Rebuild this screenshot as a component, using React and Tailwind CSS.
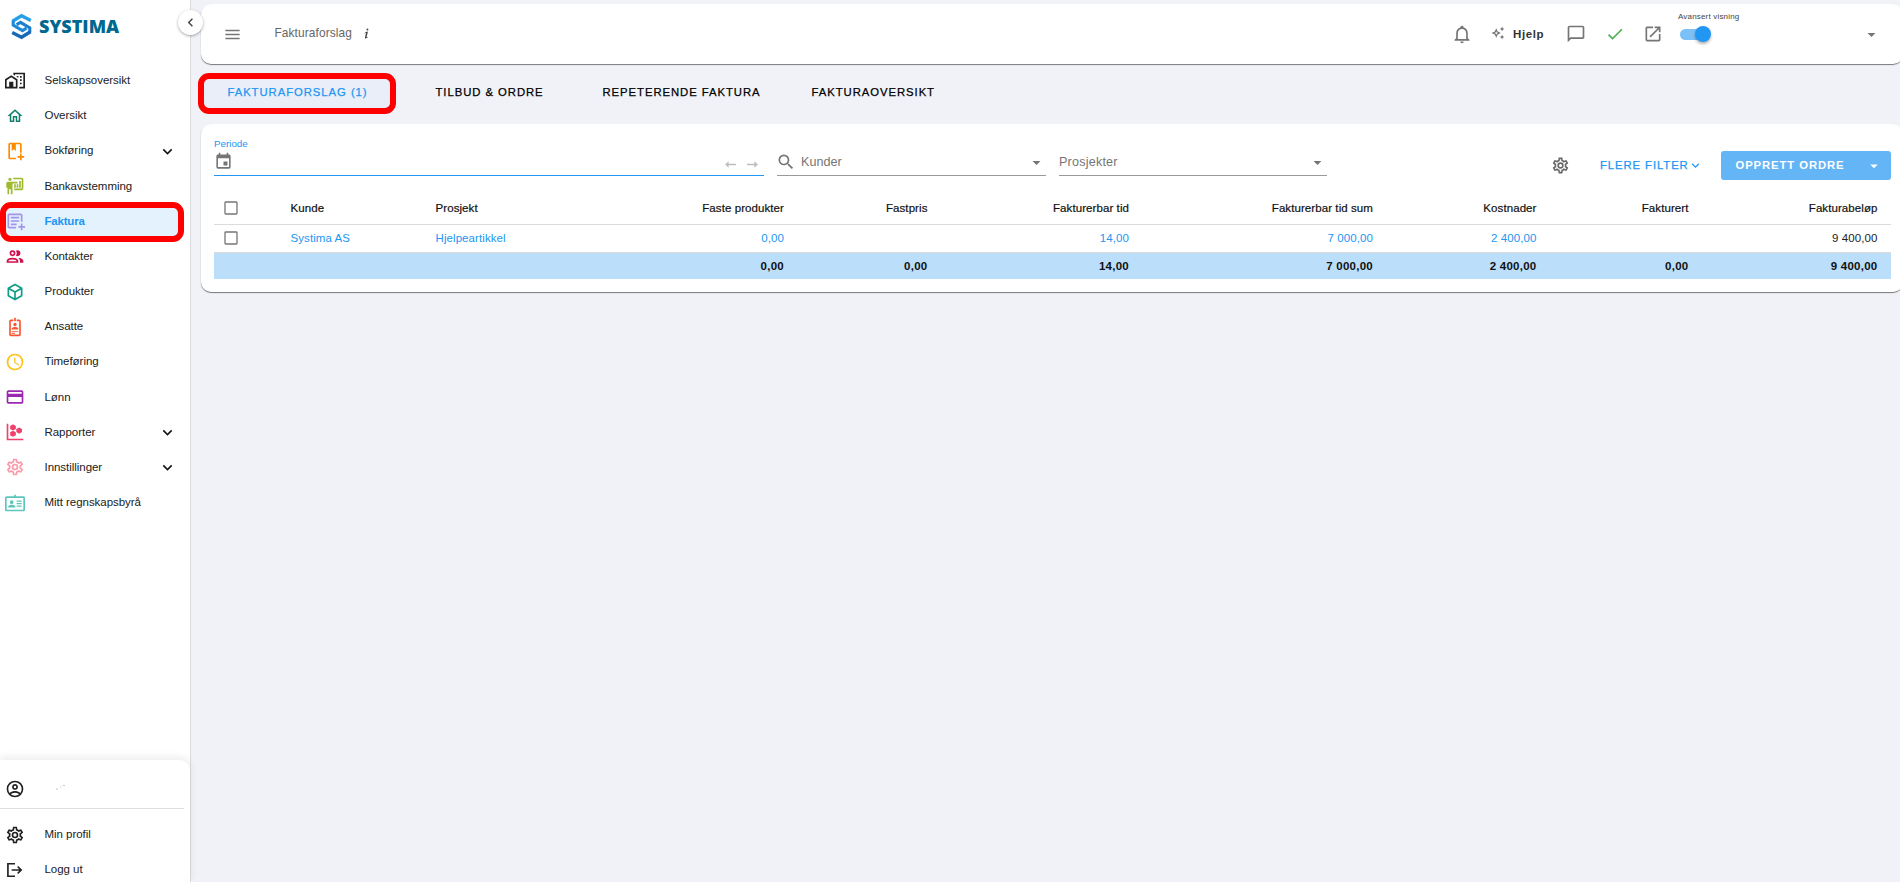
import React from 'react';
import { MdMenu, MdArrowDropDown, MdChevronLeft } from 'react-icons/md';

const paths = {
  city: 'M10 2V4.26L12 5.59V4H22V19H17V21H24V2H10M7.5 5L0 10V21H15V10L7.5 5M14 6V6.93L15.61 8H16V6H14M18 6V8H20V6H18M7.5 7.5L13 11V19H10V13H5V19H2V11L7.5 7.5M18 10V12H20V10H18M18 14V16H20V14H18Z',
  home: 'M12 5.69L17 10.19V18H15V12H9V18H7V10.19L12 5.69M12 3L2 12H5V20H11V14H13V20H19V12H22L12 3',
  book: 'M13 20c0 .7.1 1.4.35 2H6c-1.1 0-2-.9-2-2V4c0-1.1.9-2 2-2h12c1.1 0 2 .9 2 2v10.1a5.6 5.6 0 0 0-2 0V4h-5v8l-2.5-2.25L8 12V4H6v16h7M18 15v3h-3v2h3v3h2v-3h3v-2h-3v-3h-2',
  board: 'M20 17a2 2 0 0 0 2-2V4a2 2 0 0 0-2-2H9.46c.35.61.54 1.3.54 2h10v11h-9v2h9M15 7v2H9v13H7v-6H5v6H3v-8H1.5V9a2 2 0 0 1 2-2H15M8 4a2 2 0 0 1-4 0 2 2 0 0 1 4 0M17 6h2v8h-2V6M14 10h2v4h-2v-4M11 10h2v4h-2v-4',
  note: 'M13.1 19H5V5h14v8.1c.3-.1.7-.1 1-.1s.7 0 1 .1V5c0-1.1-.9-2-2-2H5c-1.1 0-2 .9-2 2v14c0 1.1.9 2 2 2h8.35a5.6 5.6 0 0 1-.25-2M7 7h10v2H7V7m0 4h10v2H7v-2m0 4h7v2H7v-2m12 0v3h-3v2h3v3h2v-3h3v-2h-3v-3h-2',
  people: 'M13.07 10.41A5 5 0 0 0 13.07 4.59A3.39 3.39 0 0 1 15 4A3.5 3.5 0 0 1 15 11A3.39 3.39 0 0 1 13.07 10.41M5.5 7.5A3.5 3.5 0 1 1 9 11A3.5 3.5 0 0 1 5.5 7.5M7.5 7.5A1.5 1.5 0 1 0 9 6A1.5 1.5 0 0 0 7.5 7.5M16 17V19H2V17S2 13 9 13 16 17 16 17M14 17C13.86 16.22 12.67 15 9 15S4.07 16.31 4 17M15.95 13A5.32 5.32 0 0 1 18 17V19H22V17S22 13.37 15.94 13Z',
  cube: 'M21,16.5C21,16.88 20.79,17.21 20.47,17.38L12.57,21.82C12.41,21.94 12.21,22 12,22C11.79,22 11.59,21.94 11.43,21.82L3.53,17.38C3.21,17.21 3,16.88 3,16.5V7.5C3,7.12 3.21,6.79 3.53,6.62L11.43,2.18C11.59,2.06 11.79,2 12,2C12.21,2 12.41,2.06 12.57,2.18L20.47,6.62C20.79,6.79 21,7.12 21,7.5V16.5M12,4.15L6.04,7.5L12,10.85L17.96,7.5L12,4.15M5,15.91L11,19.29V12.58L5,9.21V15.91M19,15.91V9.21L13,12.58V19.29L19,15.91Z',
  badge: 'M17,3H14V5H17V21H7V5H10V3H7A2,2 0 0,0 5,5V21A2,2 0 0,0 7,23H17A2,2 0 0,0 19,21V5A2,2 0 0,0 17,3M12,7A2,2 0 0,1 14,9A2,2 0 0,1 12,11A2,2 0 0,1 10,9A2,2 0 0,1 12,7M16,15H8V14C8,12.67 10.67,12 12,12C13.33,12 16,12.67 16,14V15M16,18H8V17H16V18M12,20H8V19H12V20M13,5H11V1H13V5Z',
  clock: 'M12,20A8,8 0 0,0 20,12A8,8 0 0,0 12,4A8,8 0 0,0 4,12A8,8 0 0,0 12,20M12,2A10,10 0 0,1 22,12A10,10 0 0,1 12,22C6.47,22 2,17.5 2,12A10,10 0 0,1 12,2M12.5,7V12.25L17,14.92L16.25,16.15L11,13V7H12.5Z',
  card: 'M20,8H4V6H20M20,18H4V12H20M20,4H4C2.89,4 2,4.89 2,6V18C2,19.1 2.9,20 4,20H20A2,2 0 0,0 22,18V6C22,4.89 21.1,4 20,4Z',
  chart: 'M2 2h2v18h18v2H2V2M9.6 2.8L13 4.7V8.3L9.6 10.2L6.2 8.3V4.7L9.6 2.8M9.6 10.4L13 12.3V15.9L9.6 17.8L6.2 15.9V12.3L9.6 10.4M17 6.6L20.4 8.5V12.1L17 14L13.6 12.1V8.5L17 6.6',
  cog: 'M12,8A4,4 0 0,1 16,12A4,4 0 0,1 12,16A4,4 0 0,1 8,12A4,4 0 0,1 12,8M12,10A2,2 0 0,0 10,12A2,2 0 0,0 12,14A2,2 0 0,0 14,12A2,2 0 0,0 12,10M10,22C9.75,22 9.54,21.82 9.5,21.58L9.13,18.93C8.5,18.68 7.96,18.34 7.44,17.94L4.95,18.95C4.73,19.03 4.46,18.95 4.34,18.73L2.34,15.27C2.21,15.05 2.27,14.78 2.46,14.63L4.57,12.97L4.5,12L4.57,11L2.46,9.37C2.27,9.22 2.21,8.95 2.34,8.73L4.34,5.27C4.46,5.05 4.73,4.96 4.95,5.05L7.44,6.05C7.96,5.66 8.5,5.32 9.13,5.07L9.5,2.42C9.54,2.18 9.75,2 10,2H14C14.25,2 14.46,2.18 14.5,2.42L14.87,5.07C15.5,5.32 16.04,5.66 16.56,6.05L19.05,5.05C19.27,4.96 19.54,5.05 19.66,5.27L21.66,8.73C21.79,8.95 21.73,9.22 21.54,9.37L19.43,11L19.5,12L19.43,13L21.54,14.63C21.73,14.78 21.79,15.05 21.66,15.27L19.66,18.73C19.54,18.95 19.27,19.04 19.05,18.95L16.56,17.95C16.04,18.34 15.5,18.68 14.87,18.93L14.5,21.58C14.46,21.82 14.25,22 14,22H10M11.25,4L10.88,6.61C9.68,6.86 8.62,7.5 7.85,8.39L5.44,7.35L4.69,8.65L6.8,10.2C6.4,11.37 6.4,12.64 6.8,13.8L4.68,15.36L5.43,16.66L7.86,15.62C8.63,16.5 9.68,17.14 10.87,17.38L11.24,20H12.76L13.13,17.39C14.32,17.14 15.37,16.5 16.14,15.62L18.57,16.66L19.32,15.36L17.2,13.81C17.6,12.64 17.6,11.37 17.2,10.2L19.31,8.65L18.56,7.35L16.15,8.39C15.38,7.5 14.32,6.86 13.12,6.62L12.75,4H11.25Z',
  idcard: 'M22 4h-9V2h-2v2H2C.9 4 0 4.9 0 6v14c0 1.1.9 2 2 2h20c1.1 0 2-.9 2-2V6c0-1.1-.9-2-2-2m0 16H2V6h20v14M14 9h6v1.5h-6V9m0 3h6v1.5h-6V12m0 3h6v1.5h-6V15M8 13.2A2.2 2.2 0 1 0 8 8.8a2.2 2.2 0 0 0 0 4.4M12.5 17.5H3.8v-1.1c0-1.5 2.9-2.3 4.3-2.3s4.4.8 4.4 2.3v1.1',
  account: 'M12,2A10,10 0 0,0 2,12A10,10 0 0,0 12,22A10,10 0 0,0 22,12A10,10 0 0,0 12,2M7.07,18.28C7.5,17.38 10.12,16.5 12,16.5C13.88,16.5 16.5,17.38 16.93,18.28C15.57,19.36 13.86,20 12,20C10.14,20 8.43,19.36 7.07,18.28M18.36,16.83C16.93,15.09 13.46,14.5 12,14.5C10.54,14.5 7.07,15.09 5.64,16.83C4.62,15.5 4,13.82 4,12C4,7.59 7.59,4 12,4C16.41,4 20,7.59 20,12C20,13.82 19.38,15.5 18.36,16.83M12,6C10.06,6 8.5,7.56 8.5,9.5C8.5,11.44 10.06,13 12,13C13.94,13 15.5,11.44 15.5,9.5C15.5,7.56 13.94,6 12,6M12,11A1.5,1.5 0 0,1 10.5,9.5A1.5,1.5 0 0,1 12,8A1.5,1.5 0 0,1 13.5,9.5A1.5,1.5 0 0,1 12,11Z',
  logout: 'M2.5 3.5H12v2H4.5v13H12v2H2.5v-17M15.9 7.1l4.9 4.9-4.9 4.9-1.4-1.4 2.5-2.5H8v-2h9l-2.5-2.5 1.4-1.4',
  bell: 'M10 21H14C14 22.1 13.1 23 12 23S10 22.1 10 21M21 19V20H3V19L5 17V11C5 7.9 7 5.2 10 4.3V4C10 2.9 10.9 2 12 2S14 2.9 14 4V4.3C17 5.2 19 7.9 19 11V17L21 19M17 11C17 8.2 14.8 6 12 6S7 8.2 7 11V18H17V11Z',
  sparkle: 'M9 4L11.5 9.5L17 12L11.5 14.5L9 20L6.5 14.5L1 12L6.5 9.5L9 4M9 8.83L8 11L5.83 12L8 13L9 15.17L10 13L12.17 12L10 11L9 8.83M19 9L17.74 6.26L15 5L17.74 3.75L19 1L20.25 3.75L23 5L20.25 6.26L19 9M19 23L17.74 20.26L15 19L17.74 17.75L19 15L20.25 17.75L23 19L20.25 20.26L19 23Z',
  message: 'M20 2H4C2.9 2 2 2.9 2 4V22L6 18H20C21.1 18 22 17.1 22 16V4C22 2.9 21.1 2 20 2M20 16H5.17L4 17.17V4H20V16Z',
  check: 'M21,7L9,19L3.5,13.5L4.91,12.09L9,16.17L19.59,5.59L21,7Z',
  open: 'M14,3V5H17.59L7.76,14.83L9.17,16.24L19,6.41V10H21V3M19,19H5V5H12V3H5C3.89,3 3,3.9 3,5V19A2,2 0 0,0 5,21H19A2,2 0 0,0 21,19V12H19V19Z',
  calendar: 'M19,19H5V8H19M16,1V3H8V1H6V3H5C3.89,3 3,3.89 3,5V19A2,2 0 0,0 5,21H19A2,2 0 0,0 21,19V5C21,3.89 20.1,3 19,3H18V1M17,12H12V17H17V12Z',
  search: 'M9.5,3A6.5,6.5 0 0,1 16,9.5C16,11.11 15.41,12.59 14.44,13.73L14.71,14H15.5L20.5,19L19,20.5L14,15.5V14.71L13.73,14.44C12.59,15.41 11.11,16 9.5,16A6.5,6.5 0 0,1 3,9.5A6.5,6.5 0 0,1 9.5,3M9.5,5C7,5 5,7 5,9.5C5,12 7,14 9.5,14C12,14 14,12 14,9.5C14,7 12,5 9.5,5Z',
  down: 'M7.41,8.58L12,13.17L16.59,8.58L18,10L12,16L6,10L7.41,8.58Z',
  left: 'M2 12l6.5-6v4.7H22v2.6H8.5V18L2 12',
  right: 'M22 12l-6.5-6v4.7H2v2.6h13.5V18L22 12',
  info: 'M13.5,4A1.5,1.5 0 0,0 12,5.5A1.5,1.5 0 0,0 13.5,7A1.5,1.5 0 0,0 15,5.5A1.5,1.5 0 0,0 13.5,4M13.14,8.77C11.95,8.87 8.7,11.46 8.7,11.46C8.5,11.61 8.56,11.6 8.72,11.88C8.88,12.15 8.86,12.17 9.05,12.04C9.25,11.91 9.58,11.7 10.13,11.36C12.25,10 10.47,13.14 9.56,18.43C9.2,21.05 11.56,19.7 12.17,19.3C12.77,18.91 14.38,17.8 14.54,17.69C14.76,17.54 14.6,17.42 14.43,17.17C14.31,17 14.19,17.12 14.19,17.12C13.54,17.55 12.35,18.45 12.19,17.88C12,17.31 13.22,13.4 13.89,10.71C14,10.07 14.3,8.67 13.14,8.77Z',
};

function Icon({ name, size = 20, className = '' }) {
  return (
    <svg width={size} height={size} viewBox="0 0 24 24" fill="currentColor" className={`shrink-0 ${className}`}>
      <path d={paths[name]} />
    </svg>
  );
}

const menu = [
  { label: 'Selskapsoversikt', icon: 'city', color: 'text-[#212121]' },
  { label: 'Oversikt', icon: 'home', color: 'text-[#12806a]', size: 18 },
  { label: 'Bokføring', icon: 'book', color: 'text-[#fb8c00]', expandable: true },
  { label: 'Bankavstemming', icon: 'board', color: 'text-[#9fba2f]' },
  { label: 'Faktura', icon: 'note', color: 'text-[#a393eb]', active: true },
  { label: 'Kontakter', icon: 'people', color: 'text-[#d0104c]' },
  { label: 'Produkter', icon: 'cube', color: 'text-[#0f9d8a]' },
  { label: 'Ansatte', icon: 'badge', color: 'text-[#fb5531]' },
  { label: 'Timeføring', icon: 'clock', color: 'text-[#fcc419]' },
  { label: 'Lønn', icon: 'card', color: 'text-[#9c27b0]' },
  { label: 'Rapporter', icon: 'chart', color: 'text-[#f0416c]', expandable: true },
  { label: 'Innstillinger', icon: 'cog', color: 'text-[#fb9aa8]', expandable: true },
  { label: 'Mitt regnskapsbyrå', icon: 'idcard', color: 'text-[#5cc5bd]' },
];

const tabs = [
  { label: 'TILBUD & ORDRE', className: 'ml-[39.5px] w-[167px]' },
  { label: 'REPETERENDE FAKTURA', className: 'w-[209px]' },
  { label: 'FAKTURAOVERSIKT', className: '' },
];

const columns = [
  { head: 'Faste produkter', value: '0,00', sum: '0,00' },
  { head: 'Fastpris', value: '', sum: '0,00' },
  { head: 'Fakturerbar tid', value: '14,00', sum: '14,00' },
  { head: 'Fakturerbar tid sum', value: '7 000,00', sum: '7 000,00' },
  { head: 'Kostnader', value: '2 400,00', sum: '2 400,00' },
  { head: 'Fakturert', value: '', sum: '0,00' },
  { head: 'Fakturabeløp', value: '9 400,00', sum: '9 400,00', plain: true },
];

const rowGrid = 'grid grid-cols-[76.5px_145px_199px_149.5px_143.5px_201.5px_244px_163.5px_152px_189px] items-center';

function Logo() {
  return (
    <div className="flex items-start pl-[11px] pt-[12.5px] h-[40px]">
      <svg width="21" height="27" viewBox="0 0 21 27" fill="none" className="shrink-0">
        <path d="M1.5 8.2L10.5 2.8L19.8 7.6" stroke="#27a0e6" strokeWidth="3.4" />
        <path d="M2.2 7.5V12.2L11.5 17.6L15.5 15.2" stroke="#1e8ad6" strokeWidth="3.1" />
        <path d="M18.8 19.5V14.8L9.5 9.4L5.6 11.7" stroke="#1d7fd0" strokeWidth="3.1" />
        <path d="M19.5 18.8L10.5 24.2L1.2 19.4" stroke="#1768b5" strokeWidth="3.4" />
      </svg>
      <span className="ml-[7px] mt-[4px] font-['Open_Sans',sans-serif] font-extrabold text-[18px] leading-none text-[#00688f]">SYSTIMA</span>
    </div>
  );
}

function MenuItem({ item }) {
  return (
    <div className="relative flex items-center h-[35.17px]">
      {item.active && (
        <div className="absolute left-0 top-[-2px] w-[184px] h-[40px] rounded-[11px] border-[6px] border-[#ff0000] bg-[#e3f2fd]" />
      )}
      <div className="relative w-[44.5px] flex pl-[5px]">
        <div className="w-5 flex justify-center">
          <Icon name={item.icon} size={item.size} className={item.color} />
        </div>
      </div>
      <span className={`relative grow text-[11.5px] ${item.active ? 'font-bold text-[#2196f3] tracking-[-0.2px]' : 'text-[#212121] tracking-[-0.04px]'}`}>{item.label}</span>
      {item.expandable && <Icon name="down" size={19} className="mr-[13px] text-[#111]" />}
    </div>
  );
}

function Sidebar() {
  return (
    <aside className="relative z-10 flex flex-col w-[191px] h-[882px] shrink-0 bg-white border-r border-[#dcdcdf]">
      <Logo />
      <div className="absolute left-[178px] top-[10px] w-[25px] h-[25px] rounded-full bg-white shadow-[0_1px_3px_rgba(0,0,0,0.35)] flex items-center justify-center text-[#444]">
        <MdChevronLeft size={17} />
      </div>
      <nav className="mt-[23.2px] grow">
        {menu.map((item) => <MenuItem key={item.label} item={item} />)}
      </nav>
      <div className="h-[122px] shrink-0 rounded-tr-[10px] bg-white shadow-[0_-2px_10px_rgba(0,0,0,0.09)]">
        <div className="flex items-center h-[49px] w-[184px] pt-[10px] pl-[5px] border-b border-[#dedede]">
          <Icon name="account" className="text-[#212121]" />
          <svg width="12" height="6" viewBox="0 0 12 6" className="ml-[30px] mb-1">
            <path d="M1 5h2M5 3h1M8 1.5h2" stroke="#b5b5b5" strokeWidth="0.8" />
          </svg>
        </div>
        <div className="pt-[8.3px]">
          <MenuItem item={{ label: 'Min profil', icon: 'cog', color: 'text-[#212121]' }} />
          <MenuItem item={{ label: 'Logg ut', icon: 'logout', color: 'text-[#212121]' }} />
        </div>
      </div>
    </aside>
  );
}

function TopBar() {
  return (
    <header className="flex items-center h-[60px] mt-[4px] w-[1702px] rounded-[10px] bg-white shadow-[0_1px_1px_rgba(0,0,0,0.5)] text-[#757575]">
      <MdMenu size={19} className="ml-[22px]" />
      <span className="ml-[32.5px] mb-px text-[11.9px] text-[#666] tracking-[0.1px]">Fakturaforslag</span>
      <Icon name="info" size={15} className="ml-[7.5px] mb-[2px] text-[#444]" />
      <div className="grow" />
      <Icon name="bell" />
      <Icon name="sparkle" size={14} className="ml-[19px] mb-[2px]" />
      <span className="ml-[8px] w-[53px] pt-px text-[11.5px] font-bold tracking-[0.6px] text-[#333]">Hjelp</span>
      <Icon name="message" />
      <Icon name="check" className="ml-[18.5px] text-[#4caf50]" />
      <Icon name="open" className="ml-[18.5px]" />
      <div className="relative ml-[17px] w-[26px] h-[11px] rounded-full bg-[#7cc0f8]">
        <span className="absolute left-[-2px] top-[-18px] text-[8px] leading-none whitespace-nowrap text-[#444] tracking-[0.18px] py-[2px]">Avansert visning</span>
        <div className="absolute left-[15px] top-[-2.5px] w-4 h-4 rounded-full bg-[#2196f3] shadow-[0_2px_3px_rgba(0,0,0,0.3)]" />
      </div>
      <MdArrowDropDown size={19} className="ml-[156px] mr-[22px]" />
    </header>
  );
}

function Tabs() {
  return (
    <div className="flex items-center h-[41px] mt-[9px] text-[11.3px] tracking-[0.95px] text-black [-webkit-text-stroke:0.25px_currentColor]">
      <div className="ml-[-3px] flex items-center justify-center w-[198px] h-[41px] pl-px pb-[2px] rounded-[11px] border-[6px] border-[#ff0000] bg-[#e9eef8] text-[#2196f3]">FAKTURAFORSLAG (1)</div>
      {tabs.map((tab) => (
        <div key={tab.label} className={`pb-[2.5px] whitespace-nowrap ${tab.className}`}>{tab.label}</div>
      ))}
    </div>
  );
}

function Filters() {
  return (
    <div className="flex h-[52px] pl-[13px] text-[#757575]">
      <div className="w-[550px] h-[52px] border-b-[1.5px] border-[#2196f3] flex flex-col">
        <span className="mt-[13px] text-[9.8px] leading-[14px] text-[#2196f3]">Periode</span>
        <div className="flex items-center">
          <Icon name="calendar" size={19} className="mt-[1px]" />
          <div className="grow" />
          <Icon name="left" size={13} className="mt-[7px] text-[#bdbdbd]" />
          <Icon name="right" size={13} className="mt-[7px] ml-[9px] mr-[5px] text-[#bdbdbd]" />
        </div>
      </div>
      <div className="ml-[13px] w-[269px] h-[52px] pt-[25px] border-b border-[#9a9a9a] flex items-center">
        <Icon name="search" size={20} className="ml-[-1px]" />
        <span className="ml-[5px] grow text-[12.6px]">Kunder</span>
        <MdArrowDropDown size={19} />
      </div>
      <div className="ml-[13px] w-[268px] h-[52px] pt-[25px] border-b border-[#9a9a9a] flex items-center">
        <span className="grow text-[12.6px] tracking-[0.2px]">Prosjekter</span>
        <MdArrowDropDown size={19} />
      </div>
      <div className="flex items-center mt-[27px] ml-[223.5px] h-[29px]">
        <Icon name="cog" size={19} className="text-[#666]" />
        <span className="ml-[30.5px] w-[87.5px] whitespace-nowrap text-[11.3px] text-[#2196f3] tracking-[0.92px] [-webkit-text-stroke:0.25px_currentColor]">FLERE FILTER</span>
        <Icon name="down" size={15} className="text-[#2196f3]" />
        <div className="ml-[18.5px] w-[170px] h-[29px] rounded-[3px] bg-[#64b5f6] flex items-center text-white">
          <span className="ml-[14.5px] w-[129px] text-[11.3px] font-bold tracking-[0.9px] whitespace-nowrap">OPPRETT ORDRE</span>
          <MdArrowDropDown size={18} />
        </div>
      </div>
    </div>
  );
}

function Checkbox() {
  return (
    <svg width="14" height="14" viewBox="0 0 14 14" className="ml-[10px] mb-px">
      <rect x="1" y="1" width="12" height="12" rx="0.8" fill="none" stroke="#757575" strokeWidth="1.3" />
    </svg>
  );
}

function InvoiceTable() {
  return (
    <div className="mt-[16px] ml-[13px] w-[1677px] text-[11.5px] text-[#111] tracking-[0.08px]">
      <div className={`${rowGrid} h-[33px] border-b border-[#dcdcdc] [-webkit-text-stroke:0.2px_currentColor]`}>
        <Checkbox />
        <span className="pt-px">Kunde</span>
        <span className="pt-px">Prosjekt</span>
        {columns.map((col) => <span key={col.head} className="pt-px text-right whitespace-nowrap">{col.head}</span>)}
      </div>
      <div className={`${rowGrid} h-[28px] border-b border-[#dcdcdc] text-[#2196f3]`}>
        <Checkbox />
        <span>Systima AS</span>
        <span>Hjelpeartikkel</span>
        {columns.map((col) => (
          <span key={col.head} className={`text-right ${col.plain ? 'text-[#222]' : ''}`}>{col.value}</span>
        ))}
      </div>
      <div className={`${rowGrid} h-[26px] pt-px bg-[#bbdefb] font-bold tracking-[0.25px]`}>
        <span />
        <span />
        <span />
        {columns.map((col) => <span key={col.head} className="text-right">{col.sum}</span>)}
      </div>
    </div>
  );
}

export default function App() {
  return (
    <div className="flex w-[1900px] h-[882px] overflow-hidden bg-[#f0f2f8] font-['Liberation_Sans',Arial,sans-serif]">
      <Sidebar />
      <main className="ml-[10px] w-[1699px] shrink-0">
        <TopBar />
        <Tabs />
        <section className="mt-[10px] w-[1702px] h-[168px] rounded-[10px] bg-white shadow-[0_1px_1px_rgba(0,0,0,0.5)]">
          <Filters />
          <InvoiceTable />
        </section>
      </main>
    </div>
  );
}
